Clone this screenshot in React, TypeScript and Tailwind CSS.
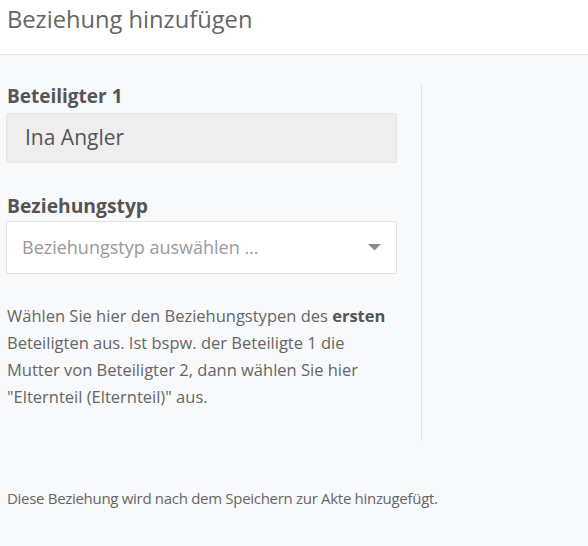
export default function App() {
    return (
        <div className="min-h-[546px] bg-[#f8f9fa] text-[#666] font-['Open_Sans',sans-serif]">
            <div className="h-[55px] bg-white border-b border-[#e3e3e3] px-[7px] pt-[4px]">
                <h1 className="text-[23.7px] leading-[30px] text-[#666]">Beziehung hinzufügen</h1>
            </div>
            <div className="flex pt-[29px] px-[6px]">
                <div className="w-[391px] pb-[30px]">
                    <label className="block text-[19px] font-bold text-[#555] leading-[24px] px-[1px]">Beteiligter 1</label>
                    <div className="mt-[5px] h-[50px] bg-[#eeeeee] border border-[#e5e5e5] rounded-[2px] flex items-center px-[18px] text-[21px] text-[#555]">
                        Ina Angler
                    </div>
                    <label className="block mt-[30px] text-[19.3px] font-bold text-[#555] leading-[26px] px-[1px]">Beziehungstyp</label>
                    <div className="mt-[2px] h-[53px] bg-white border border-[#e2e2e2] rounded-[2px] flex items-center justify-between pl-[15px] pr-[15px]">
                        <span className="text-[18px] text-[#999]">Beziehungstyp auswählen ...</span>
                        <svg width="13" height="7" viewBox="0 0 13 7">
                            <path d="M0 0 L13 0 L6.5 6.5 Z" fill="#8a8a8a" />
                        </svg>
                    </div>
                    <p className="mt-[28px] text-[16.5px] leading-[27px] text-[#666] px-[1px]">
                        Wählen Sie hier den Beziehungstypen des <b className="font-bold text-[#555]">ersten</b> Beteiligten aus. Ist bspw. der
                        Beteiligte 1 die Mutter von Beteiligter 2, dann wählen Sie hier "Elternteil (Elternteil)" aus.
                    </p>
                </div>
                <div className="ml-[24px] w-px bg-[#e3e3e3] h-[357px]" />
            </div>
            <p className="mt-[44px] px-[7px] text-[15px] tracking-[-0.3px] leading-[27px] text-[#666]">
                Diese Beziehung wird nach dem Speichern zur Akte hinzugefügt.
            </p>
        </div>
    );
}
